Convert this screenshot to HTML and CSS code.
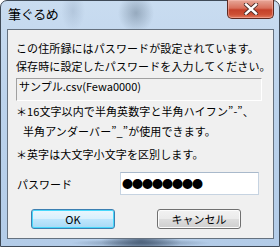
FILE: index.html
```html
<!DOCTYPE html>
<html lang="ja">
<head>
<meta charset="utf-8">
<link rel="stylesheet" href="styles.css">
</head>
<body>
<div class="window">
  <div class="titlebar">
    <span class="title">筆ぐるめ</span>
    <button class="close" aria-label="閉じる">
      <svg width="16" height="12" viewBox="0 0 16 12">
        <path d="M3 1.5 L13 10.5 M13 1.5 L3 10.5" stroke="#4a2a26" stroke-width="4.2" stroke-linecap="round"/>
        <path d="M3 1.5 L13 10.5 M13 1.5 L3 10.5" stroke="#ffffff" stroke-width="2.4" stroke-linecap="square"/>
      </svg>
    </button>
  </div>
  <div class="client">
    <p class="message">この住所録にはパスワードが設定されています。<br>保存時に設定したパスワードを入力してください。</p>
    <div class="filebox">サンプル.csv(Fewa0000)</div>
    <div class="notes">
      <div class="note"><span class="mark">＊</span>16文字以内で半角英数字と半角ハイフン”-”、</div>
      <div class="note indent">半角アンダーバー”_”が使用できます。</div>
      <div class="note last"><span class="mark">＊</span>英字は大文字小文字を区別します。</div>
    </div>
    <div class="pwrow">
      <span class="pwlabel">パスワード</span>
      <div class="pwinput">●●●●●●●●</div>
    </div>
    <div class="buttons">
      <button class="btn default">OK</button>
      <button class="btn">キャンセル</button>
    </div>
  </div>
</div>
</body>
</html>
```

FILE: styles.css
```css
html, body {
  margin: 0;
  padding: 0;
  width: 280px;
  height: 247px;
  overflow: hidden;
  background: #ffffff;
}

.window {
  box-sizing: border-box;
  width: 280px;
  height: 247px;
  border: 1px solid #3f4a57;
  border-radius: 7px 7px 0 0;
  background:
    radial-gradient(ellipse 40px 14px at 140px 240px, rgba(60, 80, 105, 0.75), rgba(60, 80, 105, 0) 100%),
    radial-gradient(ellipse 70px 4px at 140px 242px, rgba(70, 90, 115, 0.6), rgba(70, 90, 115, 0) 100%),
    radial-gradient(ellipse 18px 20px at 135px 12px, rgba(90, 110, 130, 0.45), rgba(90, 110, 130, 0) 100%),
    radial-gradient(ellipse 12px 20px at 72px 10px, rgba(140, 160, 185, 0.35), rgba(140, 160, 185, 0) 100%),
    linear-gradient(180deg, #c9dcf0 0%, #bcd3ec 40%, #b3cce8 100%);
  display: flex;
  flex-direction: column;
  font-family: "Noto Sans CJK JP", "Noto Sans", sans-serif;
}

.titlebar {
  height: 28px;
  display: flex;
  justify-content: space-between;
  align-items: flex-start;
}

.title {
  font-size: 13px;
  line-height: 16px;
  color: #000;
  padding: 5px 0 0 7px;
  letter-spacing: -0.3px;
}

.close {
  box-sizing: border-box;
  width: 47px;
  height: 19px;
  margin: -1px 5px 0 0;
  padding: 0;
  border: 1px solid #5d2a22;
  border-top: none;
  border-radius: 0 0 5px 5px;
  background: linear-gradient(180deg, #e7a899 0%, #d8705c 45%, #c5412a 55%, #cd4f34 80%, #e07a5e 100%);
  box-shadow: inset 0 0 0 1px rgba(255, 200, 190, 0.45);
  display: flex;
  align-items: center;
  justify-content: center;
}

.client {
  box-sizing: border-box;
  width: 267px;
  height: 210px;
  margin-left: 6px;
  border: 1px solid #65717f;
  background: #f0f0f0;
  color: #000;
  font-size: 11px;
}

.message {
  margin: 0;
  padding: 9px 0 0 8px;
  line-height: 18px;
  letter-spacing: 0.1px;
}

.filebox {
  box-sizing: border-box;
  width: 246px;
  height: 23px;
  margin: 3px 0 0 8px;
  padding: 0 2px;
  border: 1px solid;
  border-color: #a0a0a0 #ffffff #ffffff #a0a0a0;
  line-height: 14px;
}

.notes {
  padding-left: 8px;
  line-height: 20px;
  letter-spacing: 0.1px;
}

.mark {
  display: inline-block;
  width: 11px;
}

.indent {
  padding-left: 7px;
}

.note.last {
  margin-top: 3px;
}

.pwrow {
  display: flex;
  align-items: center;
  margin-top: 8px;
  padding-left: 9px;
}

.pwlabel {
  width: 103px;
  line-height: 16px;
}

.pwinput {
  box-sizing: border-box;
  width: 139px;
  height: 23px;
  border: 1px solid #c6d3e1;
  border-top-color: #a9b9cb;
  background: #ffffff;
  padding-left: 1px;
  font-size: 11px;
  line-height: 21px;
  letter-spacing: -1px;
}

.buttons {
  display: flex;
  gap: 42px;
  margin-top: 14px;
  padding-left: 23px;
}

.btn {
  box-sizing: border-box;
  width: 84px;
  height: 20px;
  padding: 0;
  border: 1px solid #707070;
  border-radius: 3px;
  background: linear-gradient(180deg, #f2f2f2 0%, #ebebeb 48%, #dddddd 52%, #cfcfcf 100%);
  box-shadow: inset 0 0 0 1px #fcfcfc;
  font-family: "Noto Sans CJK JP", "Noto Sans", sans-serif;
  font-size: 11px;
  line-height: 16px;
  color: #000;
}

.btn.default {
  border-color: #3c7fb1;
  background: linear-gradient(180deg, #eaf6fd 0%, #d9f0fc 48%, #bee6fd 52%, #a7d9f5 100%);
  box-shadow: inset 0 0 0 1px #48d8fb;
}
```
